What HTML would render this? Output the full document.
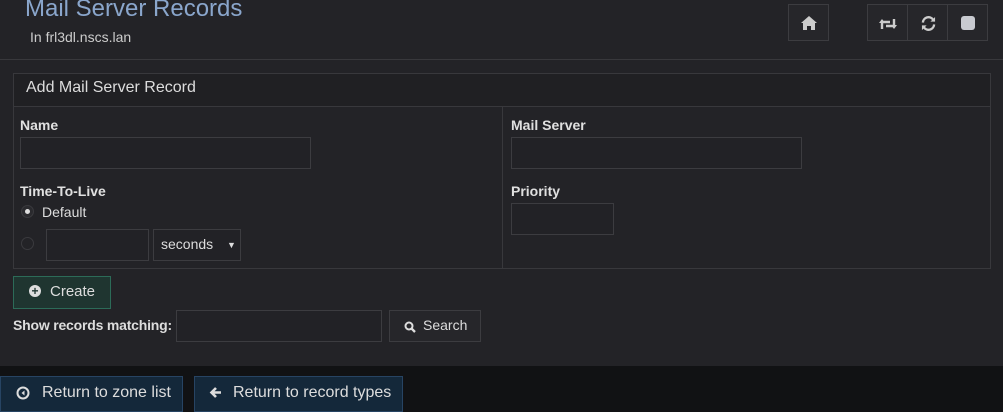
<!DOCTYPE html>
<html><head><style>
*{box-sizing:border-box;margin:0;padding:0}
body{width:1003px;height:412px;background:#232327;font-family:"Liberation Sans",sans-serif;color:#ddd;position:relative;overflow:hidden}
.a{position:absolute}
.inp{position:absolute;border:1px solid #3c3c40;background:#222226}
.btn{position:absolute;border:1px solid #3c3c40;background:#26262a}
.lbl{position:absolute;font-size:14px;font-weight:bold;color:#e0e0e0}
</style></head><body>
<div class="a" style="left:25px;top:-5px;font-size:24px;color:#8aa6cc">Mail Server Records</div>
<div class="a" style="left:30px;top:29px;font-size:14px;color:#ccc">In frl3dl.nscs.lan</div>
<div class="btn" style="left:788px;top:4px;width:41px;height:37px"><svg class="a" style="left:12px;top:11px" width="16" height="14" viewBox="0 0 16 14"><path d="M8 0L0 7h2v7h4v-4h4v4h4V7h2z" fill="#ccc"/></svg></div>
<div class="btn" style="left:867px;top:4px;width:41px;height:37px"><svg class="a" style="left:11px;top:12px" width="18" height="14" viewBox="0 0 18 14"><path d="M3 12V5h8M15 2v7H7" stroke="#ccc" stroke-width="2.4" fill="none"/><path d="M0 6l3-4 3 4zM12 8l3 4 3-4z" fill="#ccc"/></svg></div>
<div class="btn" style="left:907px;top:4px;width:41px;height:37px"><svg class="a" style="left:13px;top:11px" width="15" height="15" viewBox="0 0 16 16"><path d="M2 7a6 6 0 0 1 11-3M14 9a6 6 0 0 1-11 3" stroke="#ccc" stroke-width="2.5" fill="none"/><path d="M15 1v5h-5zM1 15v-5h5z" fill="#ccc"/></svg></div>
<div class="btn" style="left:947px;top:4px;width:41px;height:37px"><div class="a" style="left:13px;top:11px;width:14px;height:14px;background:#c8cad0;border-radius:3px"></div></div>
<div class="a" style="left:0;top:59px;width:1003px;height:1px;background:#38383c"></div>
<div class="a" style="left:13px;top:73px;width:978px;height:196px;border:1px solid #38383c"></div>
<div class="a" style="left:14px;top:74px;width:976px;height:33px;background:#202023;border-bottom:1px solid #38383c"></div>
<div class="a" style="left:26px;top:79px;font-size:16px;color:#ddd">Add Mail Server Record</div>
<div class="a" style="left:502px;top:107px;width:1px;height:161px;background:#38383c"></div>
<div class="lbl" style="left:20px;top:117px">Name</div>
<div class="inp" style="left:20px;top:137px;width:291px;height:32px"></div>
<div class="lbl" style="left:20px;top:183px">Time-To-Live</div>
<div class="a" style="left:21px;top:205px;width:13px;height:13px;border-radius:50%;background:#2a2a2e;border:1px solid #3a3a3e"><div class="a" style="left:3px;top:3px;width:5px;height:5px;border-radius:50%;background:#ddd"></div></div>
<div class="a" style="left:42px;top:204px;font-size:14px;color:#ddd">Default</div>
<div class="a" style="left:21px;top:237px;width:13px;height:13px;border-radius:50%;border:1px solid #3a3a3e"></div>
<div class="inp" style="left:46px;top:229px;width:103px;height:32px"></div>
<div class="inp" style="left:153px;top:229px;width:88px;height:32px"><span class="a" style="left:7px;top:6px;font-size:14px;color:#ddd">seconds</span><span class="a" style="left:73px;top:10px;font-size:9px;color:#ddd">▼</span></div>
<div class="lbl" style="left:511px;top:117px">Mail Server</div>
<div class="inp" style="left:511px;top:137px;width:291px;height:32px"></div>
<div class="lbl" style="left:511px;top:183px">Priority</div>
<div class="inp" style="left:511px;top:203px;width:103px;height:32px"></div>
<div class="a" style="left:13px;top:276px;width:98px;height:33px;border:1px solid #2c6b58;background:#1f3530"></div>
<div class="a" style="left:29px;top:285px;width:12px;height:12px;border-radius:50%;background:#ddd;font-size:12px;line-height:12px;text-align:center;color:#1f3530;font-weight:bold">+</div>
<div class="a" style="left:50px;top:283px;font-size:15px;color:#ddd">Create</div>
<div class="a" style="left:13px;top:317px;font-size:14px;font-weight:bold;color:#ddd;letter-spacing:-0.2px">Show records matching:</div>
<div class="inp" style="left:176px;top:310px;width:206px;height:32px"></div>
<div class="btn" style="left:389px;top:310px;width:92px;height:32px"><svg class="a" style="left:14px;top:10px" width="12" height="12" viewBox="0 0 12 12"><circle cx="5" cy="5" r="3.5" stroke="#ddd" stroke-width="2" fill="none"/><path d="M7.5 7.5L11 11" stroke="#ddd" stroke-width="2.3"/></svg><span class="a" style="left:33px;top:6px;font-size:14px;color:#ddd">Search</span></div>
<div class="a" style="left:0;top:366px;width:1003px;height:46px;background:#111214"></div>
<div class="a" style="left:0;top:376px;width:183px;height:36px;border:1px solid #274463;background:#14283a"></div>
<svg class="a" style="left:16px;top:386px" width="14" height="14" viewBox="0 0 14 14"><circle cx="7" cy="7" r="5.5" stroke="#ddd" stroke-width="2" fill="none"/><path d="M8.5 4.5L5.5 7l3 2.5z" fill="#ddd"/></svg>
<div class="a" style="left:42px;top:384px;font-size:16px;color:#ddd">Return to zone list</div>
<div class="a" style="left:194px;top:376px;width:209px;height:36px;border:1px solid #274463;background:#14283a"></div>
<svg class="a" style="left:209px;top:386px" width="13" height="13" viewBox="0 0 13 13"><path d="M12 6.5H4M7 2L2.5 6.5 7 11" stroke="#ddd" stroke-width="2.6" fill="none"/></svg>
<div class="a" style="left:233px;top:384px;font-size:16px;color:#ddd">Return to record types</div>
</body></html>
